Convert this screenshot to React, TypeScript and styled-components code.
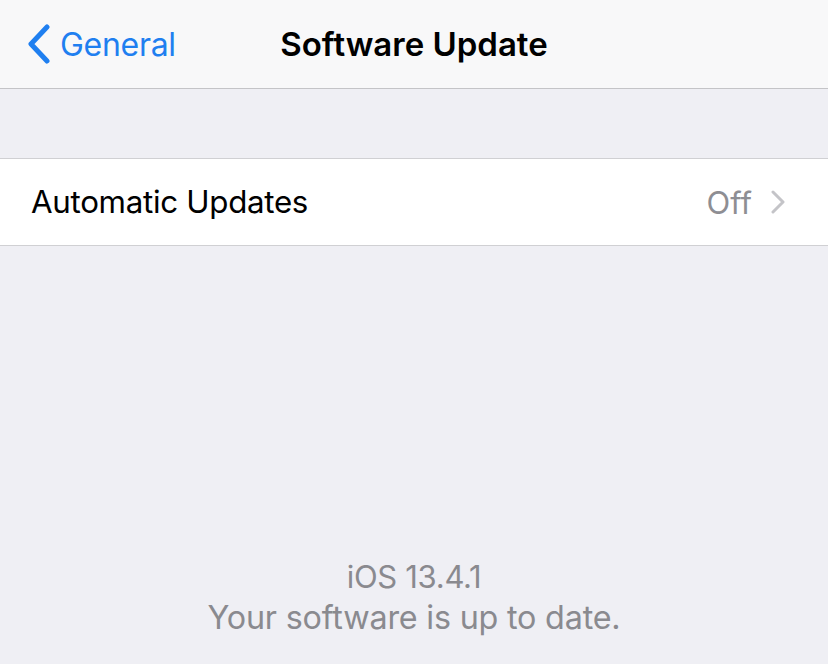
import React from "react";
import styled, { createGlobalStyle } from "styled-components";

const Global = createGlobalStyle`
  html, body { margin: 0; padding: 0; background: #efeff4; }
  body { font-family: Inter, "Noto Sans", sans-serif; -webkit-font-smoothing: antialiased; }
`;

const Screen = styled.div`
  width: 828px;
  height: 664px;
  background: #efeff4;
  display: flex;
  flex-direction: column;
  overflow: hidden;
`;

const NavBar = styled.header`
  height: 88px;
  flex: none;
  background: #f8f8f9;
  border-bottom: 1px solid #c4c4c7;
  display: grid;
  grid-template-columns: 1fr auto 1fr;
  align-items: center;
  box-sizing: content-box;
`;

const BackButton = styled.div`
  display: flex;
  align-items: center;
  gap: 9px;
  padding-left: 26px;
  color: #1f7ff0;
  font-size: 32px;
  letter-spacing: -0.3px;
`;

const Title = styled.h1`
  margin: 0;
  font-size: 33px;
  font-weight: 600;
  color: #000;
  letter-spacing: 0;
`;

const Spacer = styled.div<{ $h: number }>`
  height: ${(p) => p.$h}px;
  flex: none;
`;

const Group = styled.section`
  background: #fff;
  border-top: 1px solid #d0d0d3;
  border-bottom: 1px solid #d0d0d3;
`;

const Row = styled.div`
  height: 86px;
  display: flex;
  align-items: center;
  justify-content: space-between;
  padding: 0 43px 0 31px;
`;

const Label = styled.span`
  font-size: 31.3px;
  color: #000;
  letter-spacing: -0.3px;
`;

const Detail = styled.span`
  display: flex;
  align-items: center;
  gap: 19px;
  font-size: 31px;
  color: #8e8e93;
`;

const Footer = styled.div`
  margin-top: auto;
  padding-bottom: 25px;
  text-align: center;
  color: #8a8a8f;
  display: flex;
  flex-direction: column;
  align-items: center;
`;

const Version = styled.div`
  font-size: 31px;
  line-height: 41px;
  letter-spacing: -0.3px;
`;

const Status = styled.div`
  font-size: 32.3px;
  line-height: 42px;
  letter-spacing: -0.2px;
`;

export default function App() {
  return (
    <>
      <Global />
      <Screen>
        <NavBar>
          <BackButton>
            <svg width="25" height="40" viewBox="0 0 25 40">
              <path d="M21 3 L5 20 L21 37" fill="none" stroke="#1f7ff0" strokeWidth="5" strokeLinecap="round" strokeLinejoin="round" />
            </svg>
            General
          </BackButton>
          <Title>Software Update</Title>
          <div />
        </NavBar>
        <Spacer $h={69} />
        <Group>
          <Row>
            <Label>Automatic Updates</Label>
            <Detail>
              Off
              <svg width="14" height="24" viewBox="0 0 14 24">
                <path d="M2 2 L12 12 L2 22" fill="none" stroke="#c4c4c8" strokeWidth="3" strokeLinecap="round" strokeLinejoin="round" />
              </svg>
            </Detail>
          </Row>
        </Group>
        <Footer>
          <Version>iOS 13.4.1</Version>
          <Status>Your software is up to date.</Status>
        </Footer>
      </Screen>
    </>
  );
}
